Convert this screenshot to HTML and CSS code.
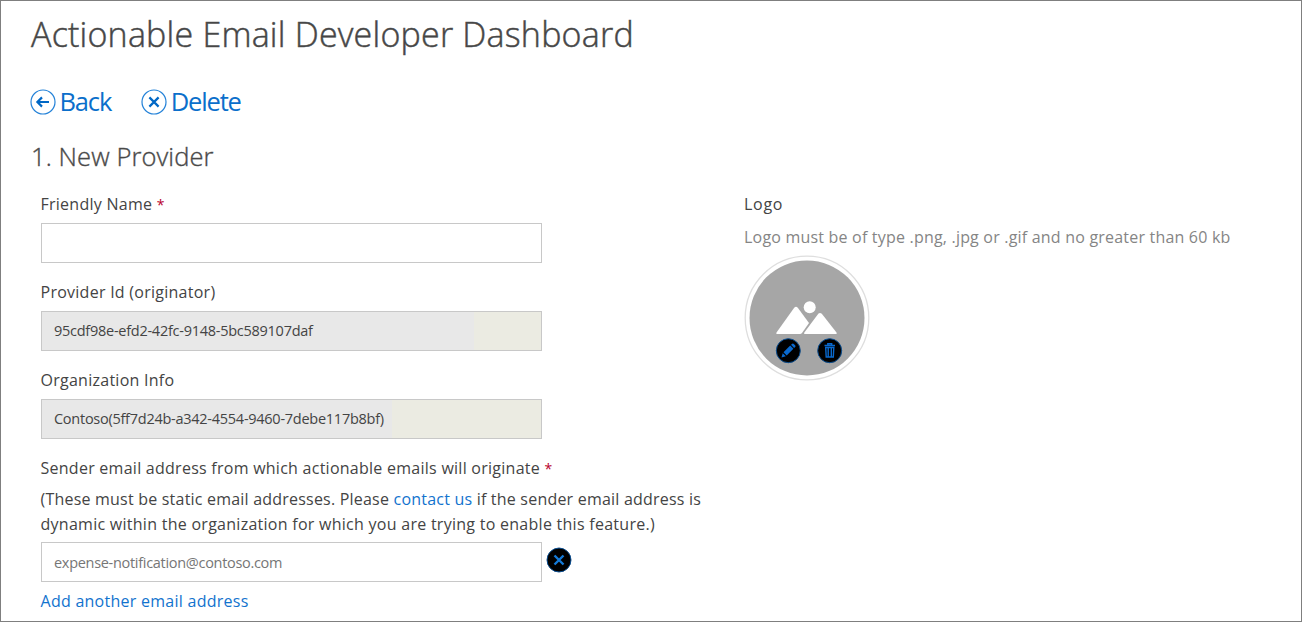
FILE: index.html
```html
<!DOCTYPE html>
<html lang="en">
<head>
<meta charset="utf-8">
<title>Actionable Email Developer Dashboard</title>
<link rel="stylesheet" href="styles.css">
</head>
<body>
<main class="page">
  <h1 class="title"><span>Actionable Email Developer Dashboard</span></h1>
  <nav class="toolbar">
    <a class="action back">
      <svg class="action-icon" viewBox="0 0 26 26"><circle cx="13" cy="13" r="12"/><path class="mark" d="M19 13H7.6M12 8.4L7.4 13L12 17.6"/></svg>
      <span>Back</span>
    </a>
    <a class="action delete">
      <svg class="action-icon" viewBox="0 0 26 26"><circle cx="13" cy="13" r="12"/><path class="mark" d="M8.4 8.4L17.6 17.6M17.6 8.4L8.4 17.6"/></svg>
      <span>Delete</span>
    </a>
  </nav>
  <h2 class="section"><span>1. New Provider</span></h2>
  <div class="columns">
    <form class="form">
      <label class="label friendly"><span>Friendly Name</span> <span class="required">*</span></label>
      <div class="field"></div>
      <label class="label provider"><span>Provider Id (originator)</span></label>
      <div class="field readonly"><span class="value id">95cdf98e-efd2-42fc-9148-5bc589107daf</span><span class="cover short"></span></div>
      <label class="label organization"><span>Organization Info</span></label>
      <div class="field readonly"><span class="value org">Contoso(5ff7d24b-a342-4554-9460-7debe117b8bf)</span><span class="cover long"></span></div>
      <label class="label sender"><span>Sender email address from which actionable emails will originate</span> <span class="required">*</span></label>
      <p class="note"><span class="line-a">(These must be static email addresses. Please <a class="link">contact us</a> if the sender email address is</span><br><span class="line-b">dynamic within the organization for which you are trying to enable this feature.)</span></p>
      <div class="email-row">
        <div class="field"><span class="value placeholder">expense-notification@contoso.com</span></div>
        <svg class="remove" viewBox="0 0 26 26"><circle class="disc" cx="13" cy="13" r="12"/><path class="cross" d="M8.5 8.5L17.5 17.5M17.5 8.5L8.5 17.5"/></svg>
      </div>
      <a class="link add"><span>Add another email address</span></a>
    </form>
    <section class="logo">
      <div class="label logo-label"><span>Logo</span></div>
      <p class="hint"><span>Logo must be of type .png, .jpg or .gif and no greater than 60 kb</span></p>
      <svg class="avatar" viewBox="0 0 126 126">
        <circle class="ring" cx="63" cy="63" r="61.8"/>
        <circle class="photo" cx="63" cy="63" r="57.5"/>
        <circle class="shape" cx="65.7" cy="52.3" r="6"/>
        <path class="shape" d="M33.5 79Q31.5 79 32.7 77.2L50.2 52.8Q52 50.8 53.8 52.8L65 68L58 78Q57.2 79 56 79Z"/>
        <path class="shape" d="M61.2 79Q59.4 79 60.5 77.2L74.3 58.8Q76 57 77.8 58.8L92.3 77.2Q93.5 79 91.5 79Z"/>
        <circle class="disc" cx="44.3" cy="95.7" r="12"/>
        <circle class="disc" cx="85.7" cy="95.7" r="12"/>
        <path class="glyph" d="M37.5 102.5L38.7 98.2L41.8 101.3ZM39.5 97.3L46.2 90.6L49.4 93.8L42.7 100.5ZM47 89.8L48.3 88.7Q49 88.2 49.8 88.9L51.3 90.4Q51.9 91.1 51.2 91.9L50.1 93Z"/>
        <path class="glyph-line" d="M80.5 90.5H91M83.8 90V88.8H87.7V90M81.7 92.5L82.2 102H89.3L89.8 92.5ZM84.2 93V101.5M87.3 93V101.5"/>
      </svg>
    </section>
  </div>
</main>
</body>
</html>
```
FILE: styles.css
```css
* { box-sizing: border-box; }
body { margin: 0; background: #fff; font-family: "Open Sans", "Noto Sans", sans-serif; color: #444; }
.page { width: 1302px; height: 622px; border: 1px solid #7f7f7f; padding: 9px 0 0 30px; overflow: hidden; white-space: nowrap; }
.title { margin: 0; height: 48px; line-height: 48px; font-size: 34px; font-weight: 300; letter-spacing: 0.21px; -webkit-text-stroke: 0.5px #505050; }
.toolbar { display: flex; gap: 31px; margin-top: 30px; height: 28px; }
.action { display: flex; align-items: center; gap: 3.5px; color: #0b6fcb; font-size: 25.5px; line-height: 28px; font-weight: 400; letter-spacing: -1.15px; }
.action span { position: relative; top: -1px; }
.action-icon { width: 26px; height: 26px; margin-left: -1px; fill: none; stroke: #2482d8; stroke-width: 1.2; }
.mark { stroke: #0067c5; stroke-width: 2.2; }
.section { margin: 22px 0 0; height: 36px; line-height: 36px; font-size: 25.5px; font-weight: 300; letter-spacing: 0.1px; -webkit-text-stroke: 0.4px #555; }
.columns { display: flex; margin-top: 16px; padding-left: 9px; }
.form { width: 703px; }
.label { display: block; height: 33px; line-height: 28px; padding-left: 0.5px; font-size: 16px; letter-spacing: 0.26px; }
.required { color: #b8002b; font-size: 14px; }
.field { display: flex; align-items: center; width: 501px; height: 40px; margin: 0 0 15px 1px; border: 1px solid #c8c8c8; padding-left: 12px; font-size: 14.5px; letter-spacing: -0.26px; }
.value { position: relative; top: -1px; }
.readonly { background: #e8e8e8; }
.cover { align-self: stretch; margin-left: auto; background: #ebebe2; }
.short { width: 67px; }
.long { width: 149px; }
.placeholder { top: 0; letter-spacing: -0.3px; color: #767676; }
.note { margin: 0 0 5px; padding-left: 0.5px; font-size: 16px; line-height: 25px; }
.line-a { letter-spacing: 0.21px; }
.line-b { letter-spacing: 0.27px; }
.link { color: #1273ce; }
.email-row { display: flex; gap: 4px; }
.email-row .field { margin-bottom: 0; }
.remove { width: 26px; height: 26px; margin-top: 5px; }
.disc { fill: #000; stroke: #0a4e91; stroke-width: 1; }
.cross { fill: none; stroke: #147ad8; stroke-width: 2.4; }
.add { display: block; height: 38px; line-height: 38px; padding-left: 0.5px; font-size: 16px; letter-spacing: 0.26px; }
.logo-label { padding-left: 1px; letter-spacing: 0.7px; }
.hint { margin: 0; height: 32px; line-height: 28px; padding-left: 1px; font-size: 16px; letter-spacing: 0.2px; color: #858585; }
.avatar { display: block; width: 126px; height: 126px; margin-left: 1px; }
.ring { fill: #fff; stroke: #dedede; stroke-width: 1.3; }
.photo { fill: #a6a6a6; }
.shape { fill: #fff; }
.glyph { fill: #0969ce; }
.glyph-line { fill: none; stroke: #0969ce; stroke-width: 1.4; }
```
